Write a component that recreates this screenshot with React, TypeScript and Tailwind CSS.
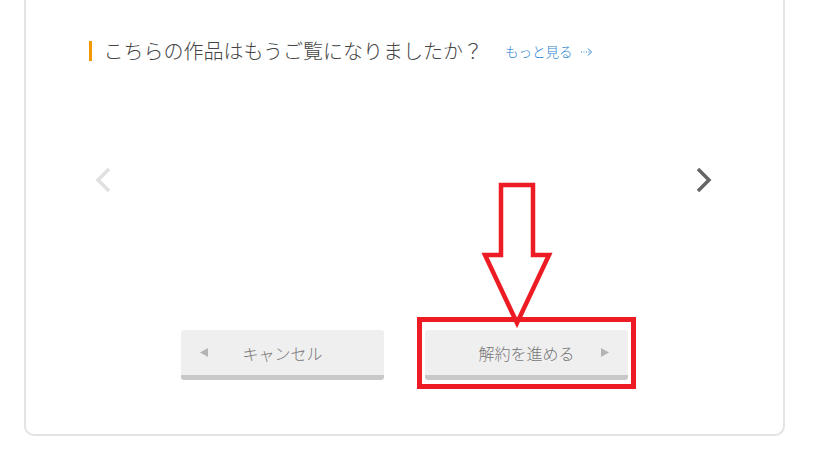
export default function App() {
  const font = { fontFamily: '"Noto Sans CJK JP", "Noto Sans", sans-serif' };

  return (
    <div className="relative h-[459px] w-[813px] overflow-hidden bg-white" style={font}>
      <div className="ml-[24px] w-[761px] rounded-b-[10px] border-2 border-t-0 border-[#e3e3e3] pt-[41px] pb-[54px]">
        <div className="mx-auto w-[632px]">
          {/* heading */}
          <div className="flex h-[20px] items-center">
            <div className="h-[20px] w-[3px] bg-[#f39800]"></div>
            <h2 className="ml-[12px] text-[20px] font-light leading-[20px] text-[#444]">
              こちらの作品はもうご覧になりましたか？
            </h2>
            <a className="ml-[22px] flex items-center text-[13.5px] font-light leading-[20px] text-[#2a84d2]">
              もっと見る
              <svg width="12" height="10" viewBox="0 0 12 10" className="ml-[9px] mt-[2px]">
                <path d="M0 5h1M2.5 5h1M5 5h1M7.5 5h1" stroke="#2a84d2" strokeWidth="1" />
                <path d="M7 1.5l3.5 3.5L7 8.5" fill="none" stroke="#2a84d2" strokeWidth="1" />
              </svg>
            </a>
          </div>

          {/* carousel */}
          <div className="mt-[106px] flex h-[26px] items-center justify-between pl-[6px] pr-[9px]">
            <svg width="16" height="26" viewBox="0 0 16 26">
              <path d="M14 2L3 13l11 11" fill="none" stroke="#e0e0e0" strokeWidth="3.5" />
            </svg>
            <svg width="16" height="26" viewBox="0 0 16 26">
              <path d="M2 2l11 11L2 24" fill="none" stroke="#666" strokeWidth="3.5" />
            </svg>
          </div>

          {/* buttons */}
          <div className="mt-[137px] flex justify-center gap-[41px]">
            <button className="grid h-[50px] w-[203px] grid-cols-[36px_1fr_36px] items-center rounded-[3px] border-b-[5px] border-[#c8c8c8] bg-[#efefef] text-[16px] font-light text-[#777]">
              <span className="flex justify-end pr-[9px]">
                <svg width="8" height="9" viewBox="0 0 8 9">
                  <path d="M8 0v9L0 4.5z" fill="#b4b4b4" />
                </svg>
              </span>
              <span className="text-center">キャンセル</span>
              <span></span>
            </button>
            <button className="grid h-[50px] w-[203px] grid-cols-[36px_1fr_36px] items-center rounded-[3px] border-b-[5px] border-[#c8c8c8] bg-[#efefef] text-[16px] font-light text-[#777]">
              <span></span>
              <span className="text-center">解約を進める</span>
              <span className="flex justify-start pl-[9px]">
                <svg width="8" height="9" viewBox="0 0 8 9">
                  <path d="M0 0v9l8-4.5z" fill="#b4b4b4" />
                </svg>
              </span>
            </button>
          </div>
        </div>
      </div>

      {/* red annotation overlay */}
      <svg className="pointer-events-none absolute left-0 top-0" width="813" height="459">
        <polygon
          points="501,185 533,185 533,255 549,255 517,323 485,255 501,255"
          fill="none"
          stroke="#ed1c24"
          strokeWidth="4.5"
        />
        <rect x="419.5" y="319.5" width="214" height="67" fill="none" stroke="#ed1c24" strokeWidth="5" />
      </svg>
    </div>
  );
}
